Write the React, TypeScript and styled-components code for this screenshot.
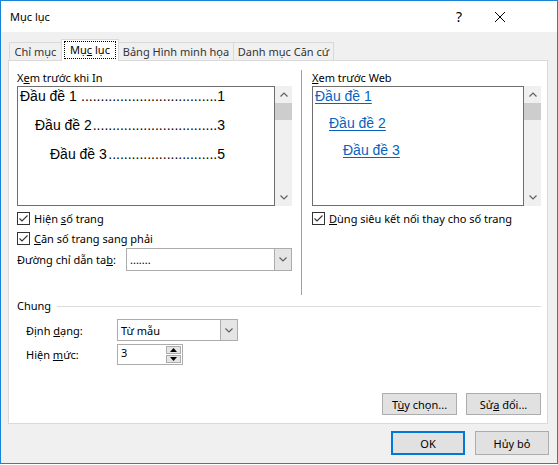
import React from "react";
import styled, { createGlobalStyle } from "styled-components";

const Global = createGlobalStyle`
  html, body { margin: 0; padding: 0; background: #fff; }
  body { font-family: "Noto Sans", "DejaVu Sans", sans-serif; font-size: 11px; color: #000; }
  * { box-sizing: border-box; }
`;

const Window = styled.div`
  width: 558px;
  height: 464px;
  border: 1px solid #1883d7;
  background: #f0f0f0;
  display: flex;
  flex-direction: column;
`;

const TitleBar = styled.div`
  height: 31px;
  flex-shrink: 0;
  background: #fff;
  display: flex;
  align-items: center;
  padding: 0 36px 0 9px;
`;

const Title = styled.div`
  flex: 1;
  font-size: 11px;
  line-height: 16px;
`;

const CaptionButton = styled.div<{ $w: number }>`
  width: ${(p) => p.$w}px;
  height: 31px;
  display: flex;
  align-items: center;
  justify-content: center;
  font-size: 14px;
  color: #000;
`;

const Body = styled.div`
  flex: 1;
  display: flex;
  flex-direction: column;
  padding: 7px 9px 0 7px;
`;

const TabStrip = styled.div`
  display: flex;
  align-items: flex-end;
  height: 21px;
  padding-left: 1px;
  position: relative;
  z-index: 1;
`;

const Tab = styled.div<{ $w: number; $active?: boolean }>`
  width: ${(p) => p.$w}px;
  height: ${(p) => (p.$active ? 22 : 18)}px;
  margin-bottom: ${(p) => (p.$active ? -1 : 0)}px;
  margin-left: -1px;
  &:first-child { margin-left: 0; }
  border: 1px solid #d9d9d9;
  border-bottom: none;
  background: ${(p) => (p.$active ? "#fff" : "#f0f0f0")};
  position: relative;
  z-index: ${(p) => (p.$active ? 2 : 1)};
  display: flex;
  align-items: center;
  justify-content: center;
  color: ${(p) => (p.$active ? "#000" : "#333")};
  line-height: 15px;
  padding-bottom: ${(p) => (p.$active ? 2 : 0)}px;
`;

const FocusLabel = styled.span`
  outline: 1px dotted #000;
  outline-offset: 0;
  padding: 0 5px;
  line-height: 16px;
`;

const Panel = styled.div`
  width: 540px;
  height: 364px;
  border: 1px solid #d9d9d9;
  background: #fff;
  display: flex;
  flex-direction: column;
  padding: 8px 6px 8px 8px;
`;

const TopArea = styled.div`
  display: flex;
  height: 226px;
`;

const Column = styled.div<{ $w: number }>`
  width: ${(p) => p.$w}px;
  display: flex;
  flex-direction: column;
`;

const VSeparator = styled.div`
  width: 1px;
  height: 225px;
  margin: 1px 10px 0 9px;
  background: #a0a0a0;
`;

const Label = styled.div`
  line-height: 17px;
  height: 17px;
  white-space: nowrap;
`;

const PreviewWrap = styled.div`
  display: flex;
  height: 120px;
`;

const PreviewBox = styled.div<{ $w: number }>`
  width: ${(p) => p.$w}px;
  height: 120px;
  border: 1px solid #6e6e6e;
  padding: 0 0 0 2px;
  display: flex;
  flex-direction: column;
  gap: ${(p) => (p.$w > 240 ? 11 : 9)}px;
  font-family: "Liberation Sans", Arial, sans-serif;
  font-size: 14px;
`;

const TocLine = styled.div<{ $level: number }>`
  display: flex;
  width: 205px;
  padding-left: ${(p) => p.$level * 15}px;
  line-height: 18px;
  white-space: pre;
`;

const Leader = styled.span`
  flex: 1;
  text-align: right;
`;

const WebLink = styled.div<{ $level: number }>`
  padding-left: ${(p) => p.$level * 14}px;
  line-height: 18px;
  color: #0563c1;
  white-space: nowrap;
  & span { text-decoration: underline; text-underline-offset: 2px; }
`;

const ScrollBar = styled.div`
  width: 17px;
  height: 120px;
  background: #f0f0f0;
  display: flex;
  flex-direction: column;
`;

const ScrollArrow = styled.div`
  height: 17px;
  display: flex;
  align-items: center;
  justify-content: center;
`;

const ScrollThumb = styled.div`
  height: 17px;
  background: #cdcdcd;
`;

const ScrollSpace = styled.div`
  flex: 1;
`;

const CheckRow = styled.div<{ $mt: number }>`
  display: flex;
  align-items: center;
  height: 13px;
  margin-top: ${(p) => p.$mt}px;
  gap: 4px;
  white-space: nowrap;
  line-height: 15px;
`;

const CheckBox = styled.div`
  width: 13px;
  height: 13px;
  border: 1px solid #333;
  background: #fff;
  display: flex;
  align-items: center;
  justify-content: center;
`;

const FieldRow = styled.div<{ $mt: number; $h: number; $pl?: number; $lw: number }>`
  display: flex;
  align-items: center;
  margin-top: ${(p) => p.$mt}px;
  height: ${(p) => p.$h}px;
  padding-left: ${(p) => p.$pl ?? 0}px;
  & > label {
    width: ${(p) => p.$lw}px;
    white-space: nowrap;
  }
`;

const Combo = styled.div<{ $w: number }>`
  width: ${(p) => p.$w}px;
  height: 100%;
  border: 1px solid #acacac;
  background: #fff;
  display: flex;
  align-items: center;
`;

const ComboText = styled.div`
  flex: 1;
  padding-left: 3px;
  white-space: nowrap;
`;

const ComboButton = styled.div`
  width: 17px;
  height: 100%;
  background: #e5e5e5;
  border-left: 1px solid #acacac;
  display: flex;
  align-items: center;
  justify-content: center;
`;

const Spin = styled.div<{ $w: number }>`
  width: ${(p) => p.$w}px;
  height: 100%;
  border: 1px solid #acacac;
  background: #fff;
  display: flex;
  align-items: stretch;
`;

const SpinButtons = styled.div`
  width: 17px;
  display: flex;
  flex-direction: column;
  padding: 1px;
  gap: 1px;
`;

const SpinButton = styled.div`
  flex: 1;
  background: #e5e5e5;
  border: 1px solid #adadad;
  display: flex;
  align-items: center;
  justify-content: center;
`;

const GroupHeader = styled.div`
  display: flex;
  align-items: center;
  gap: 6px;
  margin-top: 3px;
  height: 16px;
  line-height: 16px;
`;

const HLine = styled.div`
  flex: 1;
  height: 1px;
  background: #dcdcdc;
`;

const ButtonRow = styled.div<{ $gap: number }>`
  margin-top: auto;
  display: flex;
  justify-content: flex-end;
  gap: ${(p) => p.$gap}px;
`;

const Button = styled.div<{ $w: number; $h: number; $default?: boolean }>`
  width: ${(p) => p.$w}px;
  height: ${(p) => p.$h}px;
  background: #e1e1e1;
  border: ${(p) => (p.$default ? "2px solid #0078d7" : "1px solid #adadad")};
  display: flex;
  align-items: center;
  justify-content: center;
  white-space: nowrap;
  line-height: 15px;
`;

const Footer = styled.div`
  display: flex;
  justify-content: flex-end;
  gap: 10px;
  padding-top: 7px;
  margin-right: -1px;
`;

const Chevron = ({ up }: { up?: boolean }) => (
  <svg width="8" height="5" viewBox="0 0 8 5">
    <path
      d={up ? "M0.5 4.5 L4 1 L7.5 4.5" : "M0.5 0.5 L4 4 L7.5 0.5"}
      fill="none"
      stroke="#606060"
      strokeWidth="1.2"
    />
  </svg>
);

const Check = () => (
  <svg width="11" height="11" viewBox="0 0 11 11">
    <path d="M1.5 5.5 L4 8 L9.5 2.5" fill="none" stroke="#333" strokeWidth="1.1" />
  </svg>
);

const Tri = ({ up }: { up?: boolean }) => (
  <svg width="7" height="4" viewBox="0 0 7 4">
    <path d={up ? "M0 4 L3.5 0 L7 4 Z" : "M0 0 L7 0 L3.5 4 Z"} fill="#000" />
  </svg>
);

const ScrollBarView = () => (
  <ScrollBar>
    <ScrollArrow>
      <Chevron up />
    </ScrollArrow>
    <ScrollThumb />
    <ScrollSpace />
    <ScrollArrow>
      <Chevron />
    </ScrollArrow>
  </ScrollBar>
);

const tocItems = [
  { text: "Đầu đề 1 ", page: "1", dots: 35 },
  { text: "Đầu đề 2", page: "3", dots: 32 },
  { text: "Đầu đề 3", page: "5", dots: 28 },
];

export default function App() {
  return (
    <>
      <Global />
      <Window>
        <TitleBar>
          <Title>Mục lục</Title>
          <CaptionButton $w={40}>?</CaptionButton>
          <CaptionButton $w={42}>
            <svg width="10" height="10" viewBox="0 0 10 10">
              <path d="M0 0 L10 10 M10 0 L0 10" stroke="#000" strokeWidth="1" />
            </svg>
          </CaptionButton>
        </TitleBar>
        <Body>
          <TabStrip>
            <Tab $w={53}>Chỉ mục</Tab>
            <Tab $w={58} $active>
              <FocusLabel>
                Mụ<u>c</u> lục
              </FocusLabel>
            </Tab>
            <Tab $w={116}>Bảng Hình minh họa</Tab>
            <Tab $w={101}>Danh mục Căn cứ</Tab>
          </TabStrip>
          <Panel>
            <TopArea>
              <Column $w={275}>
                <Label>
                  X<u>e</u>m trước khi In
                </Label>
                <PreviewWrap>
                  <PreviewBox $w={259}>
                    {tocItems.map((it, i) => (
                      <TocLine key={i} $level={i}>
                        <span>{it.text}</span>
                        <Leader>{".".repeat(it.dots)}</Leader>
                        <span>{it.page}</span>
                      </TocLine>
                    ))}
                  </PreviewBox>
                  <ScrollBarView />
                </PreviewWrap>
                <CheckRow $mt={6}>
                  <CheckBox>
                    <Check />
                  </CheckBox>
                  <span>
                    Hiện <u>s</u>ố trang
                  </span>
                </CheckRow>
                <CheckRow $mt={7}>
                  <CheckBox>
                    <Check />
                  </CheckBox>
                  <span>
                    <u>C</u>ăn số trang sang phải
                  </span>
                </CheckRow>
                <FieldRow $mt={3} $h={23} $lw={109}>
                  <label>
                    Đường chỉ dẫn ta<u>b</u>:
                  </label>
                  <Combo $w={166}>
                    <ComboText>.......</ComboText>
                    <ComboButton>
                      <Chevron />
                    </ComboButton>
                  </Combo>
                </FieldRow>
              </Column>
              <VSeparator />
              <Column $w={229}>
                <Label>
                  <u>X</u>em trước Web
                </Label>
                <PreviewWrap>
                  <PreviewBox $w={212}>
                    {["Đầu đề 1", "Đầu đề 2", "Đầu đề 3"].map((t, i) => (
                      <WebLink key={i} $level={i}>
                        <span>{t}</span>
                      </WebLink>
                    ))}
                  </PreviewBox>
                  <ScrollBarView />
                </PreviewWrap>
                <CheckRow $mt={6}>
                  <CheckBox>
                    <Check />
                  </CheckBox>
                  <span>
                    <u>D</u>ùng siêu kết nối thay cho số trang
                  </span>
                </CheckRow>
              </Column>
            </TopArea>
            <GroupHeader>
              <span>Chung</span>
              <HLine />
            </GroupHeader>
            <FieldRow $mt={5} $h={22} $pl={9} $lw={91}>
              <label>
                Định <u>d</u>ạng:
              </label>
              <Combo $w={121}>
                <ComboText>Từ mẫu</ComboText>
                <ComboButton>
                  <Chevron />
                </ComboButton>
              </Combo>
            </FieldRow>
            <FieldRow $mt={3} $h={21} $pl={9} $lw={91}>
              <label>
                Hiện <u>m</u>ức:
              </label>
              <Spin $w={66}>
                <ComboText>3</ComboText>
                <SpinButtons>
                  <SpinButton>
                    <Tri up />
                  </SpinButton>
                  <SpinButton>
                    <Tri />
                  </SpinButton>
                </SpinButtons>
              </Spin>
            </FieldRow>
            <ButtonRow $gap={9}>
              <Button $w={75} $h={22}>
                <span>
                  T<u>ù</u>y chọn...
                </span>
              </Button>
              <Button $w={75} $h={22}>
                <span>
                  Sử<u>a</u> đổi...
                </span>
              </Button>
            </ButtonRow>
          </Panel>
          <Footer>
            <Button $w={74} $h={24} $default>
              OK
            </Button>
            <Button $w={74} $h={24}>
              Hủy bỏ
            </Button>
          </Footer>
        </Body>
      </Window>
    </>
  );
}
